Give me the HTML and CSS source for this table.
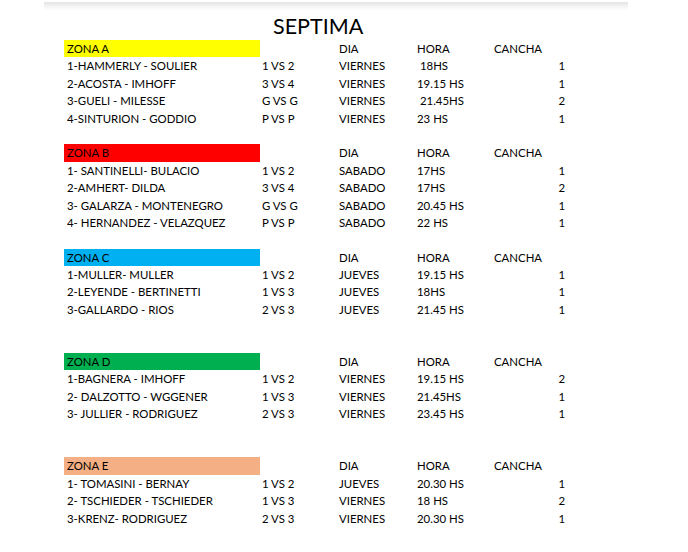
FILE: index.html
```html
<!DOCTYPE html>
<html lang="es">
<head>
<meta charset="utf-8">
<title>SEPTIMA</title>
<link rel="stylesheet" href="styles.css">
</head>
<body>
<div class="topbar"></div>
<main class="sheet">
  <h1 class="title">SEPTIMA</h1>
  <div class="table">
    <div class="row head"><div class="zone zone-a">ZONA A</div><div></div><div>DIA</div><div>HORA</div><div>CANCHA</div></div>
    <div class="row"><div class="name">1-HAMMERLY - SOULIER</div><div>1 VS 2</div><div>VIERNES</div><div class="pre"> 18HS</div><div class="num">1</div></div>
    <div class="row"><div class="name">2-ACOSTA - IMHOFF</div><div>3 VS 4</div><div>VIERNES</div><div class="pre">19.15 HS</div><div class="num">1</div></div>
    <div class="row"><div class="name">3-GUELI - MILESSE</div><div>G VS G</div><div>VIERNES</div><div class="pre"> 21.45HS</div><div class="num">2</div></div>
    <div class="row"><div class="name">4-SINTURION - GODDIO</div><div>P VS P</div><div>VIERNES</div><div class="pre">23 HS</div><div class="num">1</div></div>
    <div class="row"></div>

    <div class="row head"><div class="zone zone-b">ZONA B</div><div></div><div>DIA</div><div>HORA</div><div>CANCHA</div></div>
    <div class="row"><div class="name">1- SANTINELLI- BULACIO</div><div>1 VS 2</div><div>SABADO</div><div class="pre">17HS</div><div class="num">1</div></div>
    <div class="row"><div class="name">2-AMHERT- DILDA</div><div>3 VS 4</div><div>SABADO</div><div class="pre">17HS</div><div class="num">2</div></div>
    <div class="row"><div class="name">3- GALARZA - MONTENEGRO</div><div>G VS G</div><div>SABADO</div><div class="pre">20.45 HS</div><div class="num">1</div></div>
    <div class="row"><div class="name">4- HERNANDEZ - VELAZQUEZ</div><div>P VS P</div><div>SABADO</div><div class="pre">22 HS</div><div class="num">1</div></div>
    <div class="row"></div>

    <div class="row head"><div class="zone zone-c">ZONA C</div><div></div><div>DIA</div><div>HORA</div><div>CANCHA</div></div>
    <div class="row"><div class="name">1-MULLER- MULLER</div><div>1 VS 2</div><div>JUEVES</div><div class="pre">19.15 HS</div><div class="num">1</div></div>
    <div class="row"><div class="name">2-LEYENDE - BERTINETTI</div><div>1 VS 3</div><div>JUEVES</div><div class="pre">18HS</div><div class="num">1</div></div>
    <div class="row"><div class="name">3-GALLARDO - RIOS</div><div>2 VS 3</div><div>JUEVES</div><div class="pre">21.45 HS</div><div class="num">1</div></div>
    <div class="row"></div>
    <div class="row"></div>

    <div class="row head"><div class="zone zone-d">ZONA D</div><div></div><div>DIA</div><div>HORA</div><div>CANCHA</div></div>
    <div class="row"><div class="name">1-BAGNERA - IMHOFF</div><div>1 VS 2</div><div>VIERNES</div><div class="pre">19.15 HS</div><div class="num">2</div></div>
    <div class="row"><div class="name">2- DALZOTTO - WGGENER</div><div>1 VS 3</div><div>VIERNES</div><div class="pre">21.45HS</div><div class="num">1</div></div>
    <div class="row"><div class="name">3- JULLIER - RODRIGUEZ</div><div>2 VS 3</div><div>VIERNES</div><div class="pre">23.45 HS</div><div class="num">1</div></div>
    <div class="row"></div>
    <div class="row"></div>

    <div class="row head"><div class="zone zone-e">ZONA E</div><div></div><div>DIA</div><div>HORA</div><div>CANCHA</div></div>
    <div class="row"><div class="name">1- TOMASINI - BERNAY</div><div>1 VS 2</div><div>JUEVES</div><div class="pre">20.30 HS</div><div class="num">1</div></div>
    <div class="row"><div class="name">2- TSCHIEDER - TSCHIEDER</div><div>1 VS 3</div><div>VIERNES</div><div class="pre">18 HS</div><div class="num">2</div></div>
    <div class="row"><div class="name">3-KRENZ- RODRIGUEZ</div><div>2 VS 3</div><div>VIERNES</div><div class="pre">20.30 HS</div><div class="num">1</div></div>
  </div>
</main>
</body>
</html>
```
FILE: styles.css
```css
html, body {
  margin: 0;
  padding: 0;
  background: #ffffff;
}
body {
  font-family: Lato, "Open Sans", sans-serif;
  color: #000;
  width: 688px;
  height: 552px;
  overflow: hidden;
}
.topbar {
  margin: 2px 0 0 44px;
  width: 584px;
  height: 8px;
  background: linear-gradient(#e4e4e4, #ffffff);
}
.sheet {
  padding-left: 64px;
}
.title {
  margin: 3px 0 0 209px;
  font-weight: 400;
  font-size: 21.5px;
  line-height: 27px;
  height: 27px;
}
.table {
  display: flex;
  flex-direction: column;
}
.row {
  display: grid;
  grid-template-columns: 198px 77px 78px 77px 71px;
  height: 17.4px;
  line-height: 17.4px;
  font-size: 11.4px;
  white-space: pre;
}
.name {
  padding-left: 3px;
}
.num {
  text-align: right;
}
.zone {
  width: 196px;
  padding-left: 3px;
  box-sizing: border-box;
}
.zone-a { background: #ffff00; }
.zone-b { background: #ff0000; }
.zone-c { background: #00b0f0; }
.zone-d { background: #00b050; }
.zone-e { background: #f4b084; }
```
